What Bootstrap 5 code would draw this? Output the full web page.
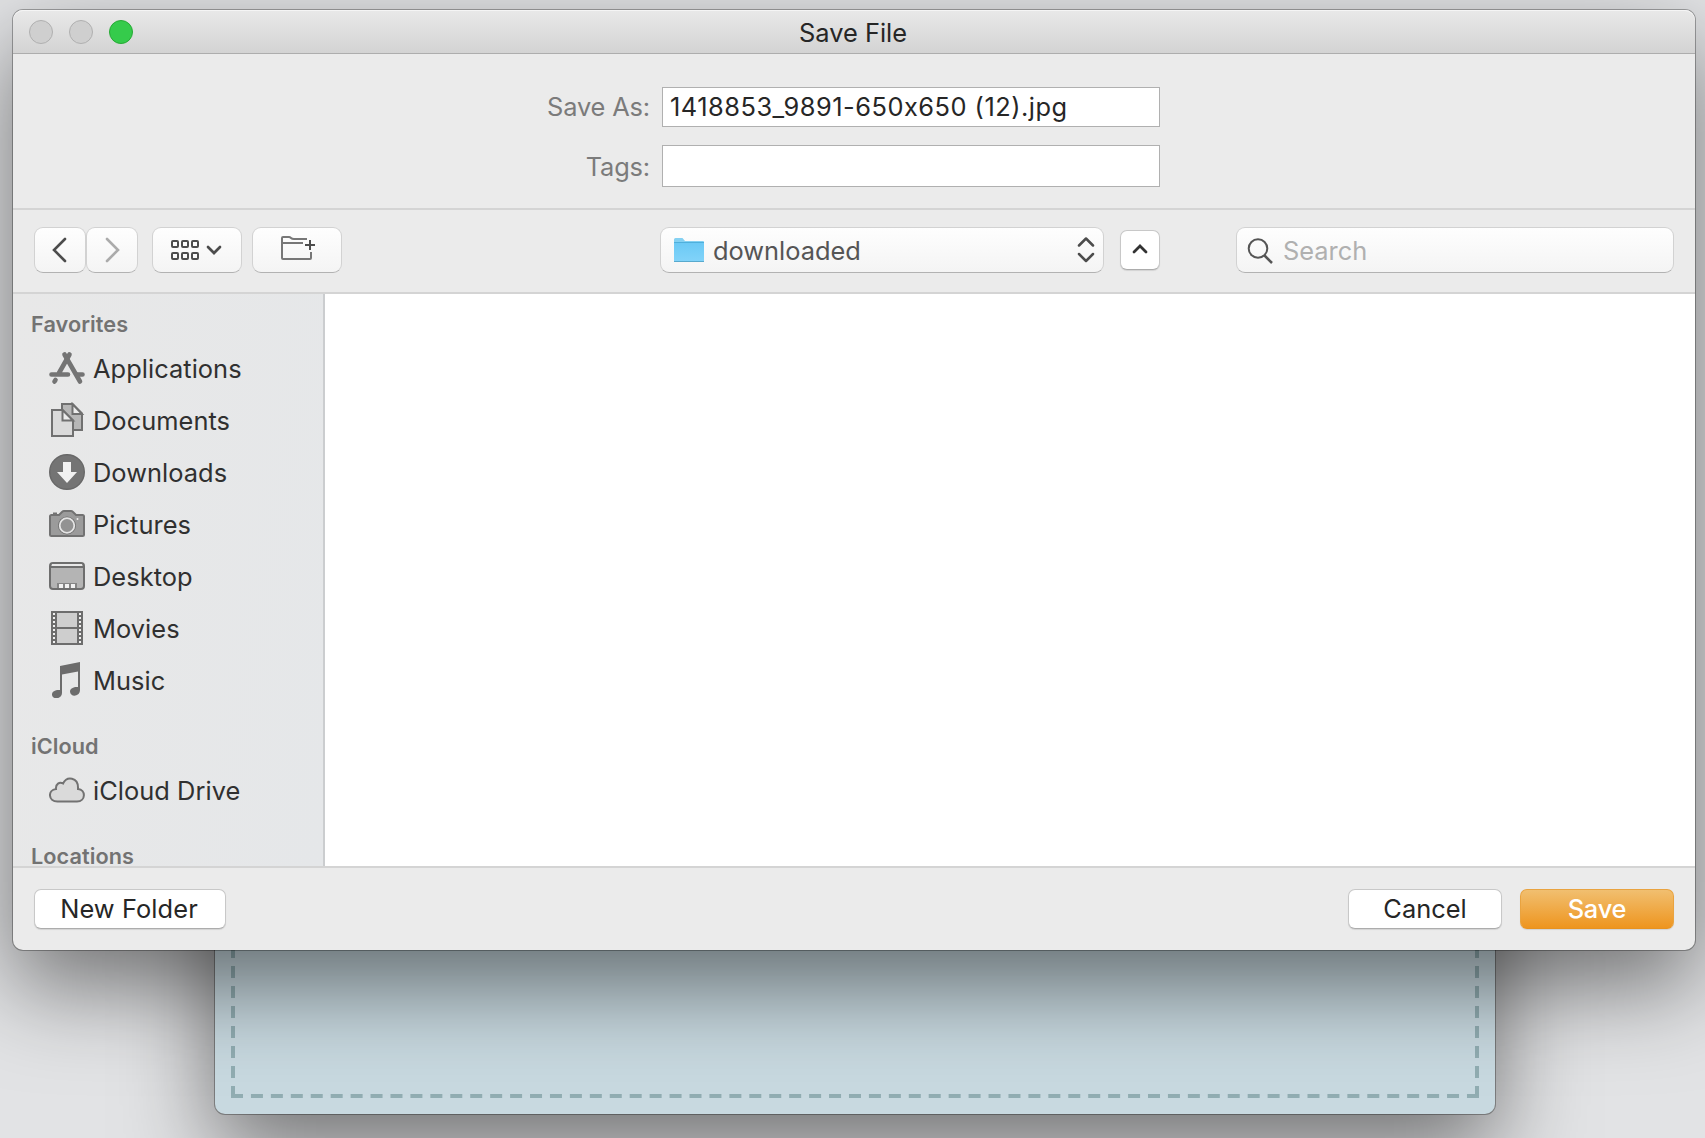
<!DOCTYPE html>
<html lang="en">
<head>
<meta charset="utf-8">
<title>Save File</title>
<link rel="stylesheet" href="https://cdn.jsdelivr.net/npm/bootstrap@5.3.0/dist/css/bootstrap.min.css">
<style>
html,body{height:100%}
body{background:#e2e3e5;font-family:Inter,"Liberation Sans",sans-serif;font-feature-settings:"calt" 0;font-size:25.4px;line-height:1.2;color:#262626}
.desk{width:1705px;height:1138px}
.sheet,.dialog-win{box-shadow:0 0 0 1px rgba(0,0,0,.3),0 36px 92px rgba(0,0,0,.5)}
.sheet{left:215px;top:200px;width:1280px;height:914px;border-radius:10px;background:#c8d9e0}
.sheet svg{display:block}
.dialog-win{left:13px;top:10px;width:1682px;height:940px;border-radius:10px;background:#ebebeb}
.titlebar{height:44px;background:linear-gradient(#e9e9e9,#d3d3d3);border-bottom:1px solid #adadad;box-shadow:inset 0 1px #f5f5f5;padding-left:16px;border-radius:10px 10px 0 0}
.dot{width:24px;height:24px;border-radius:50%;background:#cfcfcf;border:1px solid #b0b0b0;margin-right:16px}
.dot.go{background:#35cb4b;border-color:#27aa35}
.titlebar .ttl{left:0;right:2px;padding-top:4px;color:#262626}
.fields{height:156px;padding-top:33px;border-bottom:2px solid #d4d4d4}
.fields label{width:637px;color:#7b7b7b;margin-right:12px;letter-spacing:-.15px}
.fields .tagrow{margin-top:18px}
.fields .tagrow label{padding-top:2px}
.fields .form-control{width:498px;height:40px;border:1px solid #b0b0b0;border-radius:0;padding:0 6px 2px 7px;font-size:25.4px;letter-spacing:.5px;color:#262626;background:#fff;line-height:1}
.fields .tags{height:42px}
.tools{height:84px;border-bottom:2px solid #d4d4d4;padding:0 21px 2px}
.tbtn{height:46px;border:1px solid #d2d2d2;border-bottom-color:#b2b2b2;border-radius:9px;background:linear-gradient(#fefefe,#f4f4f4);padding:0;display:flex;align-items:center}
.nav-b{width:52px}
.wide-b{width:90px}
.path-b{width:444px;margin-left:318px;padding:0 8px 0 12px;color:#555}
.path-b span{margin-left:8px;padding-top:3px}
.up-b{width:40px;margin-left:16px}
.find-b{width:438px;padding-left:10px;color:#b0b0b0}
.find-b span{margin-left:9px;padding-top:3px}
.pbtn{height:40px;border:1px solid #c8c8c8;border-bottom-color:#acacac;border-radius:7px;background:#fff;padding:0;font-size:25.4px;line-height:1;color:#262626;box-shadow:0 1px 1px rgba(0,0,0,.1)}
.pbtn.go{width:154px;margin-left:18px;border-color:#e9a340;border-bottom-color:#e8921f;background:linear-gradient(#f1bf70,#ee951f);color:#fff;font-weight:500;letter-spacing:-.2px}
.main{height:572px}
.side{width:312px;border-right:2px solid #cbcdcf;background:linear-gradient(100deg,#e8e8e8,#e5e7e9)}
.sec{height:58px;padding:26px 0 0 18px;font-size:21.7px;font-weight:600;color:#737373;letter-spacing:.05px}
.sec.first{height:49px;padding-top:17px}
.sec.last{height:48px}
.side .it{height:52px;padding-left:36px;color:#303030;letter-spacing:.05px}
.side .it svg{margin:-2px 8px 0 0}
.foot{height:84px;border-top:2px solid #d4d4d4;padding:0 21px}
.foot .new-b{width:192px;letter-spacing:.1px;padding-right:2px}
.foot .cancel-b{width:154px}
</style>
<script src="https://cdn.jsdelivr.net/npm/bootstrap@5.3.0/dist/js/bootstrap.bundle.min.js"></script>
</head>
<body>
<div class="desk position-relative overflow-hidden">
  <div class="sheet position-absolute">
    <svg width="1280" height="914"><g fill="none" stroke="#91adb2" stroke-width="4"><path d="M16 896H1264" stroke-dasharray="12 7.935"/><path d="M18 898V16M1262 898V16" stroke-dasharray="12 8"/></g></svg>
  </div>
  <div class="dialog-win position-absolute d-flex flex-column">
    <div class="titlebar d-flex align-items-center position-relative flex-shrink-0">
      <span class="dot"></span><span class="dot"></span><span class="dot go"></span>
      <span class="ttl position-absolute text-center">Save File</span>
    </div>
    <div class="fields d-flex flex-column flex-shrink-0">
      <div class="d-flex align-items-center"><label class="text-end" for="fn">Save As:</label><input id="fn" class="form-control" value="1418853_9891-650x650 (12).jpg"></div>
      <div class="tagrow d-flex align-items-center"><label class="text-end" for="tg">Tags:</label><input id="tg" class="form-control tags"></div>
    </div>
    <div class="tools d-flex align-items-center flex-shrink-0">
      <button class="tbtn nav-b justify-content-center"><svg width="20" height="26" fill="none" stroke="#4c4c4c" stroke-width="2.6" stroke-linecap="round"><path d="M15 2 4 13 15 24"/></svg></button>
      <button class="tbtn nav-b justify-content-center"><svg width="20" height="26" fill="none" stroke="#ababab" stroke-width="2.6" stroke-linecap="round"><path d="M5 2 16 13 5 24"/></svg></button>
      <button class="tbtn wide-b justify-content-center" style="margin-left:14px"><svg width="54" height="24" fill="none" stroke="#4c4c4c" stroke-width="2"><rect x="2" y="3" width="6" height="6" rx="1"/><rect x="12" y="3" width="6" height="6" rx="1"/><rect x="22" y="3" width="6" height="6" rx="1"/><rect x="2" y="15" width="6" height="6" rx="1"/><rect x="12" y="15" width="6" height="6" rx="1"/><rect x="22" y="15" width="6" height="6" rx="1"/><path d="M38 9 44 15 50 9" stroke-width="2.700" stroke-linecap="round"/></svg></button>
      <button class="tbtn wide-b justify-content-center" style="margin-left:10px"><svg width="36" height="28" fill="none" stroke="#777" stroke-width="2"><path d="M28 3H15Q13 3 12 2T10 1H4Q3 1 3 2V22Q3 23 4 23H31Q32 23 32 22V16M4 7H24"/><path d="M31 4V14M26 9H36" stroke="#4c4c4c"/></svg></button>
      <button class="tbtn path-b">
        <svg width="32" height="28"><defs><linearGradient id="f" x2="0" y2="1"><stop stop-color="#6bc9f5"/><stop offset="1" stop-color="#81d3f9"/></linearGradient></defs><path d="M1 25V3.500Q1 2 2.500 2H9.500L12 5H30Q31 5 31 6V25Z" fill="#85d1f2"/><path d="M1 25V7H31V25Z" fill="url(#f)"/><path d="M1 6.500H31" stroke="#4fb0dc"/><path d="M1 25.500H31" stroke="#58a9cd"/></svg>
        <span>downloaded</span>
        <svg class="ms-auto" width="18" height="28" fill="none" stroke="#4c4c4c" stroke-width="2.500" stroke-linecap="round" stroke-linejoin="round"><path d="M2 9.500 9 2.500 16 9.500M2 18 9 25 16 18"/></svg>
      </button>
      <button class="pbtn up-b d-flex align-items-center justify-content-center"><svg width="20" height="16" fill="none" stroke="#333" stroke-width="2.800" stroke-linecap="round"><path d="M4 10 10 4 16 10"/></svg></button>
      <div class="tbtn find-b ms-auto"><svg width="27" height="28" fill="none" stroke="#555" stroke-width="2"><circle cx="11" cy="12.500" r="9.300"/><path d="M17.500 19.500 25 27" stroke-width="2.500"/></svg><span>Search</span></div>
    </div>
    <div class="main d-flex flex-shrink-0 overflow-hidden">
      <div class="side flex-shrink-0">
        <div class="sec first">Favorites</div>
        <div class="it d-flex align-items-center"><svg width="36" height="36" fill="none" stroke="#747474" stroke-width="4.600" stroke-linecap="round"><path d="M20.500 4.500 10 23M2.500 24.500H19M28 24.500H33.500M6.500 30 5.500 31.500"/><path d="M15.500 4.500 31 31.500"/><path d="M20 13.500 26.500 25" stroke="#e7e7e7" stroke-width="0"/></svg>Applications</div>
        <div class="it d-flex align-items-center"><svg width="36" height="36" fill="#b7b7b7" stroke="#707070" stroke-width="2"><path d="M13 2H23.500L33 11.500V28H13Z"/><path d="M23.500 2V12H33Z" fill="#ececec"/><path d="M3 8H13.500L24 18.500V34H3Z" fill="#dadada"/><path d="M13.500 8V18.500H24Z" fill="#ececec"/></svg>Documents</div>
        <div class="it d-flex align-items-center"><svg width="36" height="36"><circle cx="18" cy="18" r="17.300" fill="#747474" stroke="#686868" stroke-width="1.400"/><path d="M14 8H22V18H28L18 29 8 18H14Z" fill="#f1f1f1"/></svg>Downloads</div>
        <div class="it d-flex align-items-center"><svg width="36" height="36"><path d="M2.500 9H10L13 6Q14 5 15 5H22Q23 5 24 6L27 9H33.500Q35 9 35 10.500V28.500Q35 30 33.500 30H2.500Q1 30 1 28.500V10.500Q1 9 2.500 9Z" fill="#9b9b9b" stroke="#727272" stroke-width="2"/><path d="M4 7.500H8" stroke="#727272" stroke-width="2"/><circle cx="18" cy="19.500" r="9" fill="#6d6d6d"/><circle cx="18" cy="19.500" r="7.300" fill="#929292" stroke="#e4e4e4" stroke-width="1.800"/><circle cx="28.500" cy="13" r="1" fill="#eee"/></svg>Pictures</div>
        <div class="it d-flex align-items-center"><svg width="36" height="36"><rect x="1" y="5" width="34" height="26" rx="3" fill="#b4b4b4" stroke="#6e6e6e" stroke-width="2"/><path d="M3 7H33" stroke="#e8e8e8" stroke-width="2"/><path d="M2 9H34" stroke="#6e6e6e" stroke-width="2"/><path d="M8 25H28V30H8Z" fill="#858585"/><path d="M10 28H26" stroke="#f1f1f1" stroke-width="4" stroke-dasharray="4 2"/></svg>Desktop</div>
        <div class="it d-flex align-items-center"><svg width="36" height="36"><path d="M2 1H34V35H2Z" fill="#6d6d6d"/><path d="M8 3H28V17H8ZM8 19H28V33H8Z" fill="#cecece"/><path d="M5 3V34M31 3V34" stroke="#f0f0f0" stroke-width="2" stroke-dasharray="2 2"/></svg>Movies</div>
        <div class="it d-flex align-items-center"><svg width="36" height="36" fill="#6c6c6c"><path d="M11 4 31 0V28C31 35 21 35.500 21 29.500 21 26 25.500 24.500 29 25V9.500L13 12.500V31C13 37.500 3 38 3 32.500 3 29 7 27.500 11 28Z"/></svg>Music</div>
        <div class="sec">iCloud</div>
        <div class="it d-flex align-items-center"><svg width="36" height="36" fill="#dadada" stroke="#727272" stroke-width="2"><path d="M8.500 29.500C-1 29.500-1.500 18 7 17 6.500 12 10.500 9.500 14 11.500 18 3.500 29 5.500 29 15.500V17C37 17.500 37 29.500 28 29.500Z"/></svg>iCloud Drive</div>
        <div class="sec last">Locations</div>
      </div>
      <div class="flex-grow-1 bg-white"></div>
    </div>
    <div class="foot d-flex align-items-center flex-shrink-0">
      <button class="pbtn new-b">New Folder</button>
      <button class="pbtn cancel-b ms-auto">Cancel</button>
      <button class="pbtn go">Save</button>
    </div>
  </div>
</div>
</body>
</html>
